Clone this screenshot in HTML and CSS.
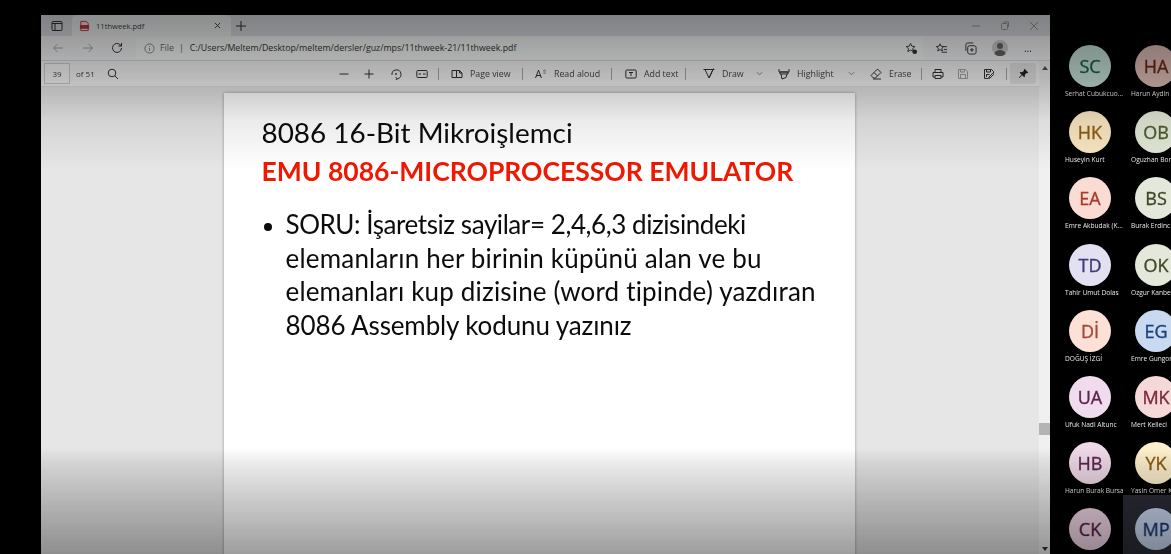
FILE: index.html
```html
<!DOCTYPE html>
<html lang="tr">
<head>
<meta charset="utf-8">
<title>11thweek.pdf</title>
<link rel="stylesheet" href="styles.css">
</head>
<body>
<div class="app">
  <main class="browser">
    <div class="tabstrip">
      <svg class="ic ic-tabs" viewBox="0 0 12 12"><rect x="1" y="1.5" width="10" height="9" rx="1"/><path d="M1 3.5h10M4 3.5v7"/></svg>
      <div class="tab">
        <svg class="ic-pdf" viewBox="0 0 12 12"><path class="pdf-a" d="M2 1h6l2 2v8H2z"/><rect class="pdf-b" x="1" y="5" width="10" height="4"/></svg>
        <span class="tab-title">11thweek.pdf</span>
        <svg class="ic ic-x" viewBox="0 0 8 8"><path d="M1 1l6 6M7 1l-6 6"/></svg>
      </div>
      <svg class="ic ic-plus" viewBox="0 0 12 12"><path d="M6 1v10M1 6h10"/></svg>
      <div class="winctl">
        <svg class="ic faint" viewBox="0 0 10 10"><path d="M1 5h8"/></svg>
        <svg class="ic faint" viewBox="0 0 10 10"><rect x="1.5" y="2.5" width="6" height="6" rx="1"/><path d="M3.5 1h5v5"/></svg>
        <svg class="ic faint" viewBox="0 0 10 10"><path d="M1 1l8 8M9 1l-8 8"/></svg>
      </div>
    </div>
    <div class="addressrow">
      <svg class="ic nav nav-back faint" viewBox="0 0 12 12"><path d="M11 6H1.5M5.5 2l-4 4 4 4"/></svg>
      <svg class="ic nav nav-fwd faint" viewBox="0 0 12 12"><path d="M1 6h9.500M6.500 2l4 4-4 4"/></svg>
      <svg class="ic nav nav-reload" viewBox="0 0 12 12"><path d="M10.500 6a4.500 4.500 0 1 1-1.300-3.200L10.500 4M10.500 1v3h-3"/></svg>
      <div class="omnibox">
        <svg class="ic ic-info" viewBox="0 0 12 12"><circle cx="6" cy="6" r="5"/><path d="M6 5.500v3M6 3.300v1"/></svg>
        <span class="file">File</span>
        <span class="pipe">|</span>
        <span class="url">C:/Users/Meltem/Desktop/meltem/dersler/guz/mps/11thweek-21/11thweek.pdf</span>
        <svg class="ic act act-star" viewBox="0 0 14 14"><path d="M6 1.500l1.400 3 3.300.4-2.400 2.200.6 3.200L6 8.700l-2.900 1.600.6-3.200L1.300 4.900l3.300-.4z"/><circle class="solid" cx="10.500" cy="10.500" r="2.500"/></svg>
      </div>
      <div class="browser-actions">
        <svg class="ic act act-fav" viewBox="0 0 14 14"><path d="M5.500 2l1.200 2.600 2.800.3-2.100 1.900.6 2.800-2.500-1.400L3 9.600l.6-2.800L1.500 4.900l2.800-.3zM9.500 5H13M9.500 8H13M7 11h6"/></svg>
        <svg class="ic act act-coll" viewBox="0 0 14 14"><rect x="4" y="4" width="9" height="9" rx="2"/><path d="M8.500 6.500v4M6.500 8.500h4M2 9.500V3a2 2 0 0 1 2-2h6"/></svg>
        <svg class="act-avatar" viewBox="0 0 16 16"><circle class="av-bg" cx="8" cy="8" r="8"/><circle class="av-fg" cx="8" cy="6" r="3"/><path class="av-fg" d="M2.500 14c.5-3 2.500-4 5.500-4s5 1 5.500 4a8 8 0 0 1-11 0z"/></svg>
        <span class="more">&#8230;</span>
      </div>
    </div>
    <div class="content">
      <div class="viewer">
        <div class="pdfbar">
          <span class="pagebox">39</span>
          <span class="lbl pad-of">of 51</span>
          <svg class="ic cell" viewBox="0 0 12 12"><circle cx="5" cy="5" r="3.800"/><path d="M8 8l3 3"/></svg>
          <span></span>
          <svg class="ic cell" viewBox="0 0 12 12"><path d="M1.500 6h9"/></svg>
          <svg class="ic cell" viewBox="0 0 12 12"><path d="M1.500 6h9M6 1.500v9"/></svg>
          <svg class="ic cell" viewBox="0 0 12 12"><path d="M2 7a4.500 4.500 0 1 1 5.500 3.800M5.500 9l2 2-2 1.200"/><circle class="solid" cx="6" cy="6" r=".9"/></svg>
          <svg class="ic cell" viewBox="0 0 12 12"><rect x=".8" y="2.500" width="10.400" height="7" rx="1"/><path d="M2.500 6h2.500M9.500 6H7"/></svg>
          <i class="sep"></i>
          <div class="tool p9"><svg class="ic" viewBox="0 0 12 12"><path d="M1 2.500h4.500v7H1zM5.500 9.500V2.500h3l2.500 2.500v4.500zM8.500 2.500v2.500H11"/></svg><span class="lbl">Page view</span></div>
          <i class="sep"></i>
          <div class="tool p11"><span class="aa">A<sup>&#8679;</sup></span><span class="lbl">Read aloud</span></div>
          <i class="sep"></i>
          <div class="tool p12"><svg class="ic" viewBox="0 0 12 12"><rect x=".8" y="2" width="10.400" height="8" rx="1"/><path d="M4 4.500h4M6 4.500v3.500"/></svg><span class="lbl">Add text</span></div>
          <i class="sep"></i>
          <div class="tool p16"><svg class="ic" viewBox="0 0 12 12"><path d="M.5 1.500h11M2 1.500L6 10l4-8.500M10.500.5L6 10"/></svg><span class="lbl">Draw</span></div>
          <svg class="ic chev" viewBox="0 0 8 8"><path d="M1 2.500l3 3 3-3"/></svg>
          <div class="tool p13"><svg class="ic" viewBox="0 0 12 12"><path d="M1 1v3h10V1M2 4h8v2H2zM3 6l1 5 4-1.500L9 6"/></svg><span class="lbl">Highlight</span></div>
          <svg class="ic chev" viewBox="0 0 8 8"><path d="M1 2.500l3 3 3-3"/></svg>
          <div class="tool p13"><svg class="ic" viewBox="0 0 12 12"><path d="M7.500 1L11 4.500 5.500 10H3.500L1 7.500zM4 4.500L7.500 8M3 11h8"/></svg><span class="lbl">Erase</span></div>
          <i class="sep"></i>
          <svg class="ic cell" viewBox="0 0 12 12"><path d="M3 4V1.500h6V4M3 9H1V4.500h10V9H9M3 7.500h6v3H3z"/></svg>
          <svg class="ic cell faint" viewBox="0 0 12 12"><path d="M1.500 1.500h7l2 2v7h-9zM3.500 10.500v-4h5v4M3.500 1.500v2.500h4v-2.500"/></svg>
          <svg class="ic cell" viewBox="0 0 12 12"><path d="M1.500 1.500h7l2 2v2M5 10.500H1.500v-9M3.500 1.500v2.500h4v-2.500M3.500 9V6.500h3M10.500 6.500L7 10l-1.500.5.500-1.500L9.500 5.500z"/></svg>
          <i class="sep"></i>
          <div class="pinbox"><svg class="ic-pin" viewBox="0 0 12 12"><path d="M7 .8l4.200 4.200-1 .6-.8-.2-2 2 .2 2-.8.8-2.200-2.200-3 3-.6-.6 3-3-2.200-2.200.8-.8 2 .2 2-2-.2-.8z"/></svg></div>
        </div>
        <div class="pagearea">
          <article class="slide">
            <h1 class="slide-title">8086 16-Bit Mikroişlemci</h1>
            <h2 class="slide-sub">EMU 8086-MICROPROCESSOR EMULATOR</h2>
            <ul class="slide-list">
              <li><span class="ln ln1">SORU: İşaretsiz sayilar= 2,4,6,3 dizisindeki</span> <span class="ln ln2">elemanların her birinin küpünü alan ve bu</span> <span class="ln ln3">elemanları kup dizisine (word tipinde) yazdıran</span> <span class="ln ln4">8086 Assembly kodunu yazınız</span></li>
            </ul>
          </article>
        </div>
      </div>
      <div class="scrollbar">
        <span class="arrow up"></span>
        <span class="thumb"></span>
        <span class="arrow down"></span>
      </div>
    </div>
  </main>
  <aside class="people">
    <div class="tile"><div class="avatar sc">SC</div><div class="name">Serhat Cubukcuo...</div></div>
    <div class="tile"><div class="avatar ha">HA</div><div class="name">Harun Aydin</div></div>
    <div class="tile"><div class="avatar hk">HK</div><div class="name">Huseyin Kurt</div></div>
    <div class="tile"><div class="avatar ob">OB</div><div class="name">Oguzhan Bor</div></div>
    <div class="tile"><div class="avatar ea">EA</div><div class="name">Emre Akbudak (K...</div></div>
    <div class="tile"><div class="avatar bs">BS</div><div class="name">Burak Erdinc</div></div>
    <div class="tile"><div class="avatar td">TD</div><div class="name">Tahir Umut Dolas</div></div>
    <div class="tile"><div class="avatar ok">OK</div><div class="name">Ozgur Kanbe</div></div>
    <div class="tile"><div class="avatar di">Dİ</div><div class="name">DOĞUŞ İZGİ</div></div>
    <div class="tile"><div class="avatar eg">EG</div><div class="name">Emre Gungor</div></div>
    <div class="tile"><div class="avatar ua">UA</div><div class="name">Ufuk Nadi Altunc</div></div>
    <div class="tile"><div class="avatar mk">MK</div><div class="name">Mert Kelleci</div></div>
    <div class="tile"><div class="avatar hb">HB</div><div class="name">Harun Burak Bursa</div></div>
    <div class="tile"><div class="avatar yk">YK</div><div class="name">Yasin Omer K</div></div>
    <div class="tile"><div class="avatar ck">CK</div></div>
    <div class="tile active"><div class="avatar mp">MP</div></div>
  </aside>
</div>
<div class="shade shade-top"></div>
<div class="shade shade-bottom"></div>
</body>
</html>
```

FILE: styles.css
```css
* { box-sizing: border-box; }
html, body { margin: 0; height: 100%; background: #000; overflow: hidden; }
body { font-family: "Open Sans", "Noto Sans", sans-serif; color: #333; }
.app { display: flex; width: 1171px; height: 554px; padding-left: 41px; }
.browser { width: 1009px; margin-top: 15px; display: flex; flex-direction: column; min-width: 0; filter: blur(.35px); }

.ic { width: 12px; height: 12px; fill: none; stroke: #333; stroke-width: 1; flex: none; }
.faint { opacity: .4; }
.solid { fill: #333; stroke: none; }

.tabstrip { height: 21px; background: #dfe1e5; display: flex; align-items: center; flex: none; padding-left: 10px; }
.ic-tabs { margin-right: 9px; }
.tab { width: 159px; height: 21px; background: #f4f5f6; border-radius: 5px 5px 0 0; display: flex; align-items: center; padding-left: 7px; }
.ic-pdf { width: 11px; height: 12px; flex: none; }
.pdf-a { fill: #eee; stroke: #c8343b; }
.pdf-b { fill: #c8343b; }
.tab-title { font-size: 7.600px; margin-left: 6px; color: #444; flex: 1; }
.ic-x { width: 7px; height: 7px; margin-right: 10px; }
.ic-plus { margin-left: 4px; }
.winctl { margin-left: auto; display: flex; gap: 19px; padding-right: 11px; }
.winctl .ic { width: 10px; height: 10px; }

.addressrow { height: 25px; background: #f7f8f9; display: flex; align-items: center; flex: none; border-bottom: 1px solid #dcdcdc; }
.nav-back { margin-left: 11px; }
.nav-fwd { margin-left: 18px; }
.nav-reload { margin-left: 17px; }
.omnibox { margin-left: 13px; width: 787px; height: 22px; background: #fbfcfc; display: flex; align-items: center; font-size: 8.800px; padding: 0 5px 0 8px; border-radius: 3px; flex: none; }
.ic-info { width: 11px; height: 11px; opacity: .6; }
.file { margin-left: 5px; color: #666; }
.pipe { margin-left: 5px; color: #666; }
.url { margin-left: 6px; color: #333; white-space: nowrap; }
.browser-actions { display: flex; align-items: center; flex: 1; }
.act { width: 13px; height: 13px; }
.act-star { margin-left: auto; }
.act-fav { margin-left: 12px; }
.act-coll { margin-left: 16px; }
.act-avatar { width: 16px; height: 16px; margin-left: 15px; flex: none; }
.av-bg { fill: #d0d0d0; }
.av-fg { fill: #666; }
.more { margin-left: 16px; font-size: 10px; line-height: 1; color: #333; }

.content { flex: 1; display: flex; min-height: 0; }
.viewer { flex: 1; display: flex; flex-direction: column; min-width: 0; }
.pdfbar { height: 26px; flex: none; background: #f7f7f7; border-bottom: 1px solid #e2e2e2; padding-left: 3px; display: grid; align-items: center;
  grid-template-columns: 26px 32px 22px 208px 24px 26px 28px 24px 8px 78px 4px 85px 4px 70px 4px 66px 12px 80px 12px 59px 10px 24px 26px 26px 8px 26px; }
.pagebox { height: 21px; border: 1px solid #cfcfcf; background: #fafafa; font-size: 8px; display: flex; align-items: center; justify-content: center; color: #444; }
.lbl { font-size: 8.800px; color: #444; white-space: nowrap; }
.pad-of { padding-left: 6px; font-size: 8px; }
.cell { justify-self: center; }
.sep { width: 1px; height: 12px; background: #a8a8a8; justify-self: center; }
.tool { display: flex; align-items: center; gap: 7px; }
.p9 { padding-left: 9px; }
.p11 { padding-left: 11px; }
.p12 { padding-left: 12px; }
.p13 { padding-left: 13px; }
.p16 { padding-left: 16px; }
.aa { font-size: 11px; line-height: 1; color: #333; width: 12px; white-space: nowrap; }
.aa sup { font-size: 6px; vertical-align: 4px; line-height: 0; }
.chev { width: 7px; height: 7px; justify-self: center; opacity: .6; }
.pinbox { width: 26px; height: 21px; background: #e6e6e6; border-radius: 2px; display: flex; align-items: center; justify-content: center; }
.ic-pin { width: 11px; height: 11px; fill: #222; }

.pagearea { flex: 1; background: #e6e6e7; display: flex; justify-content: center; padding: 6px 0 0 3px; min-height: 0; overflow: hidden; }
.slide { width: 631px; height: 480px; flex: none; margin-left: -1px; background: #fff; box-shadow: 0 0 3px rgba(0,0,0,.35); padding: 20px 0 0 38px; font-family: Lato, "Carlito", sans-serif; color: #0c0c0c; transform: translateX(-2px); filter: blur(.25px); }
.slide-title { margin: 0; font-size: 27.900px; font-weight: 400; line-height: 38px; }
.slide-sub { margin: 2px 0 0; font-size: 26.500px; font-weight: 700; line-height: 37px; color: #f01800; white-space: nowrap; }
.slide-list { margin: 18px 0 0; padding: 0 0 0 24px; font-size: 26px; line-height: 33.500px; width: 570px; }
.slide-list li::marker { font-size: 23px; }
.ln { white-space: nowrap; }
.ln1 { letter-spacing: -.43px; }
.ln2 { letter-spacing: .2px; }
.ln3 { letter-spacing: .17px; }
.ln4 { letter-spacing: -.12px; }

.scrollbar { width: 11px; flex: none; background: #f0f0f0; display: flex; flex-direction: column; align-items: center; position: relative; }
.arrow { width: 0; height: 0; border-left: 3px solid transparent; border-right: 3px solid transparent; }
.arrow.up { border-bottom: 4px solid #555; margin-top: 5px; }
.arrow.down { border-top: 4px solid #333; margin-top: auto; margin-bottom: 3px; }
.thumb { position: absolute; top: 362px; left: 0; width: 11px; height: 12px; background: #b4b4b4; }

.people { width: 121px; flex: none; padding: 32px 0 0 7px; display: grid; grid-template-columns: 66px 66px; grid-auto-rows: 66.200px; overflow: hidden; align-content: start; filter: blur(.3px); }
.tile { padding-top: 13px; width: 66px; overflow: hidden; }
.tile.active { background: #2c2c38; }
.avatar { width: 42px; height: 42px; border-radius: 50%; margin: 0 auto; display: flex; align-items: center; justify-content: center; font-size: 18px; font-weight: 500; line-height: 1; -webkit-text-stroke: .35px currentColor; }
.name { margin: 2px 0 0 8px; font-size: 6.600px; line-height: 10px; color: #e8e8e8; white-space: nowrap; }

.sc { background: #c3dfd5; color: #1c5f4c; }
.ha { background: #ddbcb5; color: #6e2a1a; }
.hk { background: #f9e6c2; color: #8a6015; }
.ob { background: #e2e8d6; color: #4e5c30; }
.ea { background: #fbdcd4; color: #a83b2a; }
.bs { background: #e3e8da; color: #3f4526; }
.td { background: #e3e0f1; color: #3d3a78; }
.ok { background: #e3e8da; color: #3f4a26; }
.di { background: #fde0d6; color: #a04a36; }
.eg { background: #c9d9ef; color: #1a3f7a; }
.ua { background: #f0dced; color: #5a2550; }
.mk { background: #f5d9d9; color: #7a2838; }
.hb { background: #f0dae9; color: #5c2650; }
.yk { background: #fdf0cc; color: #8a5a10; }
.ck { background: #f2d8e8; color: #5a2048; }
.mp { background: #cad8f0; color: #1b3a78; }

.shade { position: absolute; left: 0; width: 1171px; pointer-events: none; }
.shade-top { top: 0; height: 170px; background: linear-gradient(to bottom, rgba(0,0,0,.46) 0, rgba(0,0,0,.39) 30px, rgba(0,0,0,.24) 80px, rgba(0,0,0,.08) 120px, rgba(0,0,0,0) 100%); }
.shade-bottom { top: 448px; height: 106px; background: linear-gradient(to bottom, rgba(0,0,0,0) 0, rgba(0,0,0,.08) 15px, rgba(0,0,0,.2) 50px, rgba(0,0,0,.38) 100%); }
```
